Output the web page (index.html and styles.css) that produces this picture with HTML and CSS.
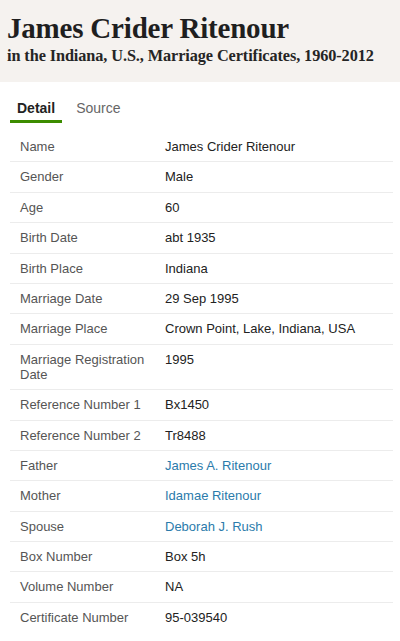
FILE: index.html
```html
<!DOCTYPE html>
<html>
<head>
<meta charset="utf-8">
<link rel="stylesheet" href="styles.css">
</head>
<body>
<header class="hero">
  <h1 class="title">James Crider Ritenour</h1>
  <p class="subtitle">in the Indiana, U.S., Marriage Certificates, 1960-2012</p>
</header>
<nav class="tabs">
  <span class="tab active">Detail</span>
  <span class="tab">Source</span>
</nav>
<div class="table">
  <div class="row"><div class="label">Name</div><div class="value">James Crider Ritenour</div></div>
  <div class="row"><div class="label">Gender</div><div class="value">Male</div></div>
  <div class="row"><div class="label">Age</div><div class="value">60</div></div>
  <div class="row"><div class="label">Birth Date</div><div class="value">abt 1935</div></div>
  <div class="row"><div class="label">Birth Place</div><div class="value">Indiana</div></div>
  <div class="row"><div class="label">Marriage Date</div><div class="value">29 Sep 1995</div></div>
  <div class="row"><div class="label">Marriage Place</div><div class="value">Crown Point, Lake, Indiana, USA</div></div>
  <div class="row"><div class="label">Marriage Registration Date</div><div class="value">1995</div></div>
  <div class="row"><div class="label">Reference Number 1</div><div class="value">Bx1450</div></div>
  <div class="row"><div class="label">Reference Number 2</div><div class="value">Tr8488</div></div>
  <div class="row"><div class="label">Father</div><div class="value link">James A. Ritenour</div></div>
  <div class="row"><div class="label">Mother</div><div class="value link">Idamae Ritenour</div></div>
  <div class="row"><div class="label">Spouse</div><div class="value link">Deborah J. Rush</div></div>
  <div class="row"><div class="label">Box Number</div><div class="value">Box 5h</div></div>
  <div class="row"><div class="label">Volume Number</div><div class="value">NA</div></div>
  <div class="row last"><div class="label">Certificate Number</div><div class="value">95-039540</div></div>
</div>
</body>
</html>
```
FILE: styles.css
```css
html, body {
  margin: 0;
  padding: 0;
  background: #ffffff;
}
body {
  font-family: "Liberation Sans", Arial, sans-serif;
  color: #222;
}
.hero {
  background: #f5f2ef;
  padding: 12px 7px 14px;
  height: 56px;
}
.title {
  margin: 0;
  font-family: "Liberation Serif", "Times New Roman", serif;
  font-weight: bold;
  font-size: 29px;
  line-height: 32px;
  color: #1f1f1f;
  letter-spacing: -0.2px;
  white-space: nowrap;
}
.subtitle {
  margin: 0;
  font-family: "Liberation Serif", "Times New Roman", serif;
  font-weight: bold;
  font-size: 16.3px;
  line-height: 24px;
  color: #252525;
  letter-spacing: -0.1px;
  white-space: nowrap;
}
.tabs {
  display: flex;
  padding: 18px 0 0 10px;
}
.tab {
  font-size: 14px;
  line-height: 17px;
  color: #666;
  padding: 0 7px 3px;
  margin-right: 7px;
}
.tab.active {
  font-weight: bold;
  color: #222;
  border-bottom: 3px solid #3c8c00;
}
.table {
  margin: 9px 7px 0 10px;
}
.row {
  display: flex;
  padding: 7px 0 7.4px;
  border-bottom: 1px solid #ececec;
  font-size: 13px;
  line-height: 15px;
}
.row.last {
  border-bottom: none;
}
.label {
  width: 135px;
  padding-left: 10px;
  margin-right: 10px;
  color: #555;
}
.value {
  color: #222;
}
.value.link {
  color: #2b7bab;
}
```
